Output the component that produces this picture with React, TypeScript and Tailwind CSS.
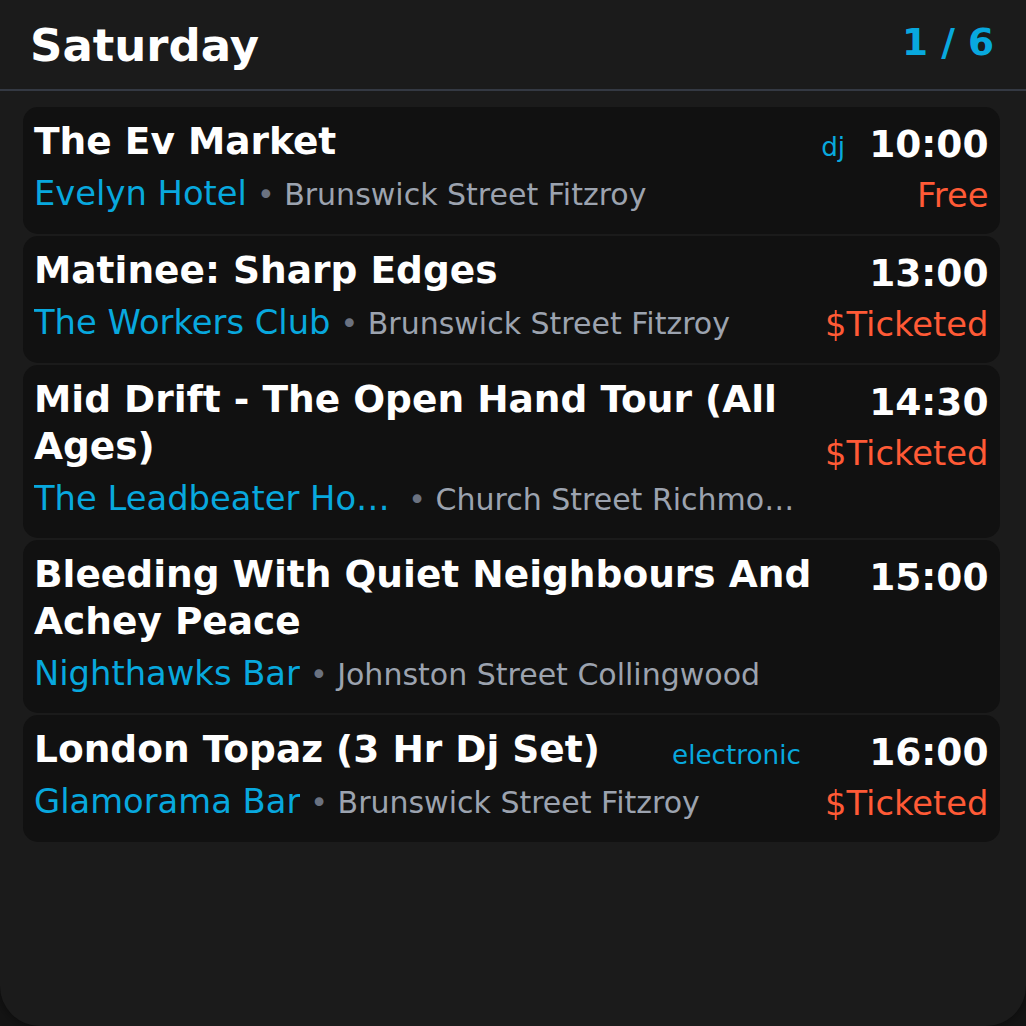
const events = [
  {
    title: "The Ev Market",
    tag: "dj",
    venue: "Evelyn Hotel",
    address: "Brunswick Street Fitzroy",
    time: "10:00",
    price: "Free",
  },
  {
    title: "Matinee: Sharp Edges",
    venue: "The Workers Club",
    address: "Brunswick Street Fitzroy",
    time: "13:00",
    price: "$Ticketed",
  },
  {
    title: "Mid Drift - The Open Hand Tour (All Ages)",
    venue: "The Leadbeater Hotel",
    address: "Church Street Richmond",
    time: "14:30",
    price: "$Ticketed",
  },
  {
    title: "Bleeding With Quiet Neighbours And Achey Peace",
    venue: "Nighthawks Bar",
    address: "Johnston Street Collingwood",
    time: "15:00",
  },
  {
    title: "London Topaz (3 Hr Dj Set)",
    tag: "electronic",
    venue: "Glamorama Bar",
    address: "Brunswick Street Fitzroy",
    time: "16:00",
    price: "$Ticketed",
  },
];

export default function App() {
  return (
    <div
      className="h-[1026px] w-full overflow-hidden bg-[#141414]"
      style={{ fontFamily: '"DejaVu Sans", "Liberation Sans", sans-serif' }}
    >
      <div className="h-full rounded-b-[40px] bg-[#1b1b1b] shadow-[0_0_12px_rgba(0,0,0,0.5)]">
        {/* header */}
        <div className="flex items-start justify-between pb-[13px] pl-[30px] pr-[32px] pt-[16px]">
          <h1 className="text-[45px] font-bold leading-[60px] text-white">Saturday</h1>
          <span className="text-[37.5px] font-bold leading-[52.5px] text-[#08a8de]">1 / 6</span>
        </div>
        <div className="h-[2px] bg-[#343943]" />

        {/* list */}
        <div className="flex flex-col gap-[1.5px] pl-[22.5px] pr-[26px] pt-[15.5px]">
          {events.map((e) => (
            <div
              key={e.title}
              className="flex gap-[24px] rounded-[15px] bg-[#111111] px-[11.5px] py-[11.25px]"
            >
              <div className="flex min-w-0 flex-1 flex-col">
                <div className="flex items-end justify-between gap-[24px]">
                  <p className="text-[37.5px] font-bold leading-[1.25] text-white">{e.title}</p>
                  {e.tag && (
                    <span className="-mb-[2px] shrink-0 text-[26.25px] leading-[37.5px] text-[#08a8de]">
                      {e.tag}
                    </span>
                  )}
                </div>
                <div className="mt-[3.75px] flex min-w-0 items-baseline gap-[10px]">
                  <span className="min-w-0 truncate text-[33.75px] leading-[52.5px] text-[#08a8de]">
                    {e.venue}
                  </span>
                  <span className="min-w-0 truncate text-[30px] leading-[52.5px] text-[#9ca3af]">
                    <span className="text-[#6b7280]">•</span> {e.address}
                  </span>
                </div>
              </div>
              <div className="flex shrink-0 flex-col items-end">
                <span className="text-[37.5px] font-bold leading-[52.5px] text-white">{e.time}</span>
                {e.price && (
                  <span className="text-[33.75px] leading-[52.5px] text-[#ff5a36]">{e.price}</span>
                )}
              </div>
            </div>
          ))}
        </div>
      </div>
    </div>
  );
}
